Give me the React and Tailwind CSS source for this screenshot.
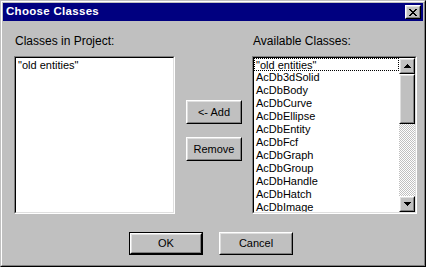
import React from "react";

const available = [
  "\"old entities\"",
  "AcDb3dSolid",
  "AcDbBody",
  "AcDbCurve",
  "AcDbEllipse",
  "AcDbEntity",
  "AcDbFcf",
  "AcDbGraph",
  "AcDbGroup",
  "AcDbHandle",
  "AcDbHatch",
  "AcDbImage",
];

// pixel rows of the close "X" glyph
const xRows = [
  [[0, 2], [6, 2]],
  [[1, 2], [5, 2]],
  [[2, 4]],
  [[3, 2]],
  [[2, 4]],
  [[1, 2], [5, 2]],
  [[0, 2], [6, 2]],
];

/* ---------- Win95 bevels ---------- */
function Raised({ className = "", children }) {
  return (
    <div className={`border border-t-white border-l-white border-b-black border-r-black ${className}`}>
      <div className="w-full h-full border border-t-[#dfdfdf] border-l-[#dfdfdf] border-b-[#808080] border-r-[#808080] flex items-center justify-center">
        {children}
      </div>
    </div>
  );
}

function Sunken({ className = "", children }) {
  return (
    <div className={`border border-t-[#808080] border-l-[#808080] border-b-white border-r-white ${className}`}>
      <div className="w-full h-full border border-t-black border-l-black border-b-[#dfdfdf] border-r-[#dfdfdf] bg-white overflow-hidden">
        {children}
      </div>
    </div>
  );
}

function Button({ label, isDefault }) {
  if (isDefault) {
    return (
      <div className="w-[74px] h-[23px] border border-black">
        <Raised className="w-full h-full">
          <span className="text-[11px] leading-none">{label}</span>
        </Raised>
      </div>
    );
  }
  return (
    <Raised className="w-[74px] h-[23px]">
      <span className="text-[11px] leading-none">{label}</span>
    </Raised>
  );
}

function Arrow({ down }) {
  return (
    <svg width="7" height="4" viewBox="0 0 7 4" className={down ? "rotate-180" : ""}>
      <path d="M3 0h1v1h1v1h1v1h1v1H0V3h1V2h1V1h1z" fill="#000" />
    </svg>
  );
}

export default function App() {
  return (
    <div
      className="w-[426px] h-[267px] bg-[#c0c0c0] border border-t-[#c0c0c0] border-l-[#c0c0c0] border-b-black border-r-black text-black"
      style={{ fontFamily: "'Liberation Sans', Arial, sans-serif" }}
    >
      <div className="w-full h-full border border-t-white border-l-white border-b-[#808080] border-r-[#808080] p-px flex flex-col">

        {/* TITLE BAR */}
        <div className="h-[18px] bg-[#000080] flex items-center justify-between pl-[3px] pr-[2px]">
          <span className="text-white font-bold text-[11.5px] leading-none tracking-[0.3px]">Choose Classes</span>
          <Raised className="w-[16px] h-[14px] bg-[#c0c0c0]">
            <svg width="8" height="7" viewBox="0 0 8 7" shapeRendering="crispEdges">
              {xRows.map((row, y) =>
                row.map(([x, w]) => <rect key={`${y}-${x}`} x={x} y={y} width={w} height={1} fill="#000" />)
              )}
            </svg>
          </Raised>
        </div>

        {/* BODY */}
        <div className="flex-1 flex flex-col">
          <div className="flex pl-[11px] pt-[14px]">

            {/* LEFT */}
            <div className="w-[161px] flex flex-col">
              <div className="h-[13px] text-[12px] leading-[13px] pl-px">Classes in Project:</div>
              <Sunken className="mt-[8px] w-[161px] h-[158px]">
                <div className="pl-[2px] text-[11px] leading-[13px] mt-px">"old entities"</div>
              </Sunken>
            </div>

            {/* MIDDLE */}
            <div className="w-[77px] flex flex-col pl-[11px] pt-[65px] gap-[13px]">
              <Raised className="w-[56px] h-[24px]">
                <span className="text-[11px] leading-none">&lt;- Add</span>
              </Raised>
              <Raised className="w-[56px] h-[24px]">
                <span className="text-[11px] leading-none">Remove</span>
              </Raised>
            </div>

            {/* RIGHT */}
            <div className="w-[165px] flex flex-col">
              <div className="h-[13px] text-[12px] leading-[13px] pl-px">Available Classes:</div>
              <Sunken className="mt-[8px] w-[165px] h-[158px]">
                <div className="flex h-full">
                  <div className="flex-1 flex flex-col overflow-hidden">
                    {available.map((c, i) => (
                      <div
                        key={c}
                        className={`h-[13px] shrink-0 text-[11px] leading-[12px] pl-[2px] ${
                          i === 0 ? "border border-dotted border-black pl-px" : ""
                        }`}
                      >
                        {c}
                      </div>
                    ))}
                  </div>

                  {/* SCROLLBAR */}
                  <div className="w-[16px] flex flex-col bg-[repeating-conic-gradient(#c0c0c0_0%_25%,#ffffff_0%_50%)] bg-[length:2px_2px]">
                    <Raised className="w-[16px] h-[16px] bg-[#c0c0c0]">
                      <Arrow />
                    </Raised>
                    <Raised className="w-[16px] h-[50px] bg-[#c0c0c0]" />
                    <div className="flex-1" />
                    <Raised className="w-[16px] h-[16px] bg-[#c0c0c0]">
                      <Arrow down />
                    </Raised>
                  </div>
                </div>
              </Sunken>
            </div>
          </div>

          {/* FOOTER */}
          <div className="flex gap-[16px] pl-[126px] mt-[18px]">
            <Button label="OK" isDefault />
            <Button label="Cancel" />
          </div>
        </div>
      </div>
    </div>
  );
}
